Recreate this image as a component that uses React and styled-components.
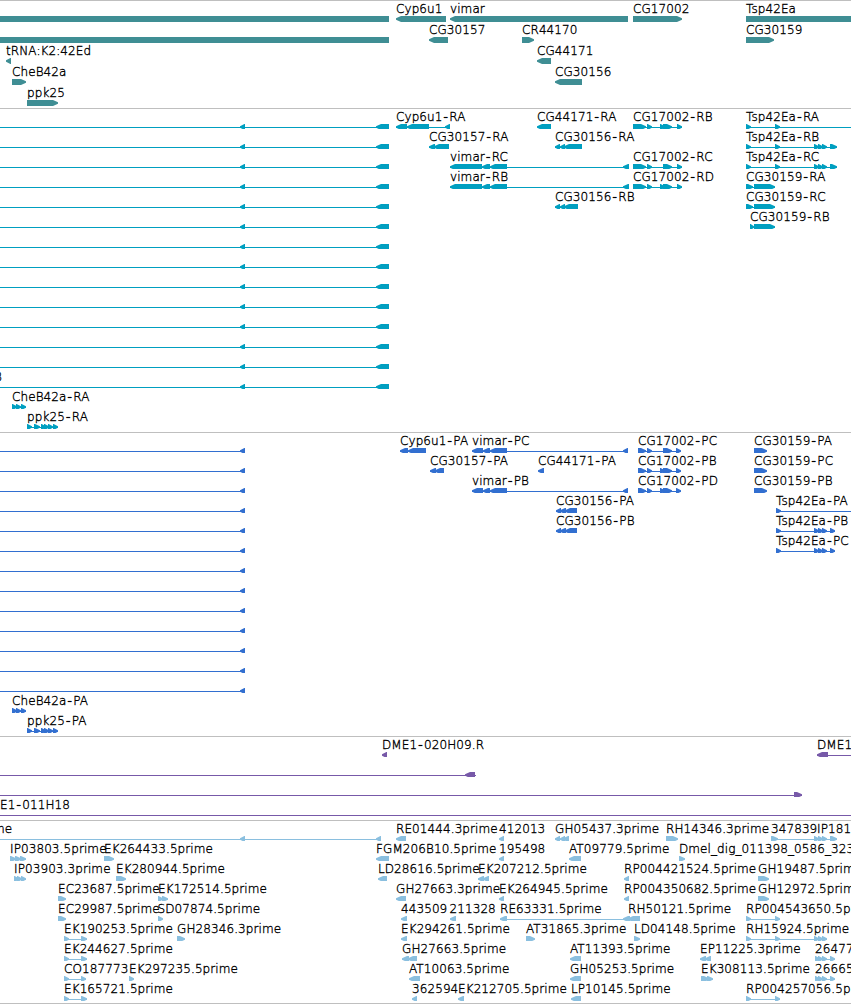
import React from "react";
import styled, { createGlobalStyle } from "styled-components";

const GlobalStyle = createGlobalStyle`
  body {
    margin: 0;
    background: #fff;
    overflow: hidden;
  }
`;

const Browser = styled.main`
  width: 851px;
  height: 1004px;
  display: flex;
  flex-direction: column;
  overflow: hidden;
  background: #fff;
`;

const TrackPanel = styled.section`
  flex: none;
  display: flex;
  flex-direction: column;
  border-top: 1px solid #bfbfbf;
  padding-bottom: ${(p) => p.$gap}px;
  color: ${(p) => p.$color};
`;

const Lane = styled.svg`
  display: block;
  flex: none;
  width: 851px;
  height: ${(p) => p.$height}px;
  overflow: hidden;
`;

const Label = styled.text`
  font-family: "DejaVu Sans", sans-serif;
  font-size: 12px;
  font-weight: 200;
  letter-spacing: 0.09px;
  fill: #000;
  stroke: #000;
  stroke-width: 0.35px;
  white-space: pre;
`;

const Dash = styled.tspan`
  letter-spacing: 1.4px;
  stroke-width: 0.7px;
`;

const Base = styled.rect`
  fill: currentColor;
`;

const Block = styled.path`
  fill: currentColor;
`;

const END = 860;

// Feature: label, label x, strand (-1, 1 or 0 for no visible tip), blocks, intron line span
const f = (label, x, strand, blocks, line) => ({ label, x, strand, blocks, line });
const L = -1;
const R = 1;

const blockPath = ([a, b], strand) => {
  const tip = Math.min(5, b - a - 0.6);
  if (strand === L) return `M${a} 17.3L${a + tip} 15H${b}V21H${a + tip}L${a} 18.7Z`;
  if (strand === R) return `M${b} 17.3L${b - tip} 15H${a}V21H${b - tip}L${b} 18.7Z`;
  return `M${a} 15H${b}V21H${a}Z`;
};

function Feature({ label, x, strand, blocks, line }) {
  const span =
    line || (blocks.length > 1 ? [blocks[0][0], blocks[blocks.length - 1][1]] : null);
  const [head, tail] = label.split("-");
  return (
    <g>
      {span && <Base x={span[0]} y={18} width={span[1] - span[0]} height={1} />}
      {blocks.map((b, i) => (
        <Block key={i} d={blockPath(b, strand)} />
      ))}
      {label && (
        <Label x={x} y={12}>
          {head}
          {tail && <Dash dx={1.1}>-</Dash>}
          {tail}
        </Label>
      )}
    </g>
  );
}

function Track({ color, laneHeight = 20, gap, lanes }) {
  return (
    <TrackPanel $color={color} $gap={gap}>
      {lanes.map((features, i) => (
        <Lane key={i} $height={laneHeight}>
          {features.map((ft, j) => (
            <Feature key={j} {...ft} />
          ))}
        </Lane>
      ))}
    </TrackPanel>
  );
}

const genes = [
  [
    f("", 0, 0, [[-5, 389]]),
    f("Cyp6u1", 396, L, [[396, 446]]),
    f("vimar", 450, L, [[450, 628]]),
    f("CG17002", 633, R, [[633, 682]]),
    f("Tsp42Ea", 746, R, [[746, END]]),
  ],
  [
    f("", 0, 0, [[-5, 389]]),
    f("CG30157", 429, L, [[429, 448]]),
    f("CR44170", 522, R, [[522, 534]]),
    f("CG30159", 746, R, [[746, 774]]),
  ],
  [f("tRNA:K2:42Ed", 6, L, [[6, 11]]), f("CG44171", 537, L, [[537, 551]])],
  [f("CheB42a", 12, R, [[12, 26]]), f("CG30156", 555, L, [[555, 582]])],
  [f("ppk25", 27, R, [[27, 58]])],
];

const cheExons = [[12, 17], [16, 21], [21, 26]];
const ppkExons = [[27, 32], [34, 40], [41, 46], [44, 49], [48, 53], [53, 58]];
const tspTail = [[814, 819], [818, 823], [822, 827], [830, 837]];
const tspR = [[746, 751], [775, 780], ...tspTail];
const vimarR = [[450, 482], [482, 490], [490, 507], [623, 629]];
const cgR = [[633, 646], [647, 652], [660, 665], [663, 672], [677, 682]];
const cgRShort = cgR.filter((b) => b[0] !== 660);

const transcriptFeatures = {
  0: [
    f("Cyp6u1-RA", 396, L, [[396, 407], [407, 429], [445, 450]]),
    f("CG44171-RA", 537, L, [[537, 551]]),
    f("CG17002-RB", 633, R, cgR),
    f("Tsp42Ea-RA", 746, R, [[746, 751], [775, 780]], [746, END]),
  ],
  1: [
    f("CG30157-RA", 429, L, [[429, 435], [434, 449]]),
    f("CG30156-RA", 555, L, [[555, 560], [560, 565], [564, 582]]),
    f("Tsp42Ea-RB", 746, R, tspR),
  ],
  2: [
    f("vimar-RC", 450, L, vimarR),
    f("CG17002-RC", 633, R, cgRShort),
    f("Tsp42Ea-RC", 746, R, tspR),
  ],
  3: [
    f("vimar-RB", 450, L, vimarR),
    f("CG17002-RD", 633, R, cgR),
    f("CG30159-RA", 746, R, [[746, 753], [754, 775]]),
  ],
  4: [
    f("CG30156-RB", 555, L, [[555, 560], [560, 565], [564, 578]]),
    f("CG30159-RC", 746, R, [[746, 753], [754, 775]]),
  ],
  5: [f("CG30159-RB", 750, R, [[750, 754], [754, 775]])],
};

const transcripts = Array.from({ length: 16 }, (_, i) => {
  if (i === 14) return [f("CheB42a-RA", 12, R, cheExons)];
  if (i === 15) return [f("ppk25-RA", 27, R, ppkExons)];
  return [
    f(i === 13 ? "B" : "", -6, L, [[240, 245], [376, 389]], [0, 389]),
    ...(transcriptFeatures[i] || []),
  ];
});

const vimarP = [[472, 483], [483, 490], [490, 507], [623, 628]];
const cgP = [[638, 646], [647, 652], [660, 665], [663, 672], [676, 681]];
const cgPShort = cgP.filter((b) => b[0] !== 660);
const cg56P = [[556, 561], [560, 566], [565, 577]];
const tspP = [[776, 781], [814, 819], [818, 823], [822, 827], [830, 835]];

const proteinFeatures = {
  0: [
    f("Cyp6u1-PA", 400, L, [[400, 408], [408, 426]]),
    f("vimar-PC", 472, L, vimarP),
    f("CG17002-PC", 638, R, cgPShort),
    f("CG30159-PA", 754, R, [[754, 767]]),
  ],
  1: [
    f("CG30157-PA", 430, L, [[430, 436], [435, 444]]),
    f("CG44171-PA", 538, L, [[538, 544]]),
    f("CG17002-PB", 638, R, cgP),
    f("CG30159-PC", 754, R, [[754, 767]]),
  ],
  2: [
    f("vimar-PB", 472, L, vimarP),
    f("CG17002-PD", 638, R, cgP),
    f("CG30159-PB", 754, R, [[754, 767]]),
  ],
  3: [
    f("CG30156-PA", 556, L, cg56P),
    f("Tsp42Ea-PA", 776, R, [[776, 781]], [776, END]),
  ],
  4: [f("CG30156-PB", 556, L, cg56P), f("Tsp42Ea-PB", 776, R, tspP)],
  5: [f("Tsp42Ea-PC", 776, R, tspP)],
};

const proteins = Array.from({ length: 15 }, (_, i) => {
  if (i === 13) return [f("CheB42a-PA", 12, R, cheExons)];
  if (i === 14) return [f("ppk25-PA", 27, R, ppkExons)];
  return [f("", 0, L, [[240, 245]], [0, 245]), ...(proteinFeatures[i] || [])];
});

const clones = [
  [f("DME1-020H09.R", 382, L, [[382, 387]]), f("DME1", 817, L, [[817, 828]], [817, END])],
  [f("", 0, L, [[465, 475]], [0, 476])],
  [f("", 0, R, [[794, 802]], [0, 802])],
  [f("E1-011H18", 0, R, [], [0, END])],
];

const pair = [[746, 751], [775, 780]];
const shortPair = [[64, 69], [81, 87]];
const edgeRun = [[815, 820], [818, 823], [822, 827], [830, 835]];

const ests = [
  [
    f("me", -7, L, [[240, 245], [376, 381]], [0, 381]),
    f("RE01444.3prime", 396, L, [[396, 406]]),
    f("412013", 499, L, [[499, 504]]),
    f("GH05437.3prime", 555, L, [[555, 560], [560, 565], [563, 569]]),
    f("RH14346.3prime", 666, R, [[666, 678]]),
    f("347839", 771, R, [[771, 778]], [771, 815]),
    f("IP181", 817, R, tspTail),
  ],
  [
    f("IP03803.5prime", 10, R, [[10, 16], [15, 21], [20, 26]]),
    f("EK264433.5prime", 104, R, [[104, 114]]),
    f("FGM206B10.5prime", 376, L, [[376, 389]]),
    f("195498", 499, L, [[499, 504]]),
    f("AT09779.5prime", 569, L, [[569, 581]]),
    f("Dmel_dig_011398_0586_323", 679, R, [[679, 685]]),
  ],
  [
    f("IP03903.3prime", 14, R, [[14, 19], [17, 22], [21, 26]]),
    f("EK280944.5prime", 116, R, [[116, 126]]),
    f("LD28616.5prime", 378, L, [[378, 387]]),
    f("EK207212.5prime", 478, L, [[478, 484], [483, 489]]),
    f("RP004421524.5prime", 624, L, [[624, 629]]),
    f("GH19487.5prime", 758, R, [[758, 769]]),
  ],
  [
    f("EC23687.5prime", 58, R, [[58, 66]]),
    f("EK172514.5prime", 158, R, [[158, 163], [162, 168]]),
    f("GH27663.3prime", 396, L, [[396, 406]]),
    f("EK264945.5prime", 499, L, [[499, 504]]),
    f("RP004350682.5prime", 624, L, [[624, 629]]),
    f("GH12972.5prime", 758, R, [[758, 769]]),
  ],
  [
    f("EC29987.5prime", 58, R, [[58, 66]]),
    f("SD07874.5prime", 157.5, R, [[158, 163]]),
    f("443509", 401, L, [[401, 407]]),
    f("211328", 449.5, L, [[450, 456]]),
    f("RE63331.5prime", 500, L, [[500, 507]], [500, 624]),
    f("RH50121.5prime", 628, L, [[623, 630], [628, 640]]),
    f("RP004543650.5prime", 746, R, pair),
  ],
  [
    f("EK190253.5prime", 64, R, shortPair),
    f("GH28346.3prime", 177, R, [[177, 185]]),
    f("EK294261.5prime", 401, L, [[401, 407]]),
    f("AT31865.3prime", 526, R, [[526, 535]]),
    f("LD04148.5prime", 634, R, [[634, 640]]),
    f("RH15924.5prime", 746, R, [...pair, ...tspTail.slice(0, 3)]),
  ],
  [
    f("EK244627.5prime", 64, R, shortPair),
    f("GH27663.5prime", 402, L, [[402, 409], [408, 417]]),
    f("AT11393.5prime", 570, L, [[570, 581]]),
    f("EP11225.3prime", 700, L, [[700, 706], [705, 711]]),
    f("26477", 815, R, edgeRun),
  ],
  [
    f("CO187773", 64, R, [[64, 69], [81, 86]]),
    f("EK297235.5prime", 129, R, [[129, 134]]),
    f("AT10063.5prime", 409, L, [[409, 420]]),
    f("GH05253.5prime", 570, L, [[570, 581]]),
    f("EK308113.5prime", 701, R, [[701, 709], [707, 713]]),
    f("26665", 815, R, edgeRun),
  ],
  [
    f("EK165721.5prime", 64, R, shortPair),
    f("362594", 412, L, [[412, 417]]),
    f("EK212705.5prime", 458, L, [[458, 464]]),
    f("LP10145.5prime", 571, L, [[571, 581]]),
    f("RP004257056.5prime", 746, R, pair),
  ],
];

export default function App() {
  return (
    <Browser>
      <GlobalStyle />
      <Track color="#3f8e94" laneHeight={21} gap={2} lanes={genes} />
      <Track color="#009fc0" gap={3} lanes={transcripts} />
      <Track color="#326fd0" gap={3} lanes={proteins} />
      <Track color="#7759a8" gap={3} lanes={clones} />
      <Track color="#8abfdf" gap={2} lanes={ests} />
      <TrackPanel $gap={0} $color="#000" />
    </Browser>
  );
}
